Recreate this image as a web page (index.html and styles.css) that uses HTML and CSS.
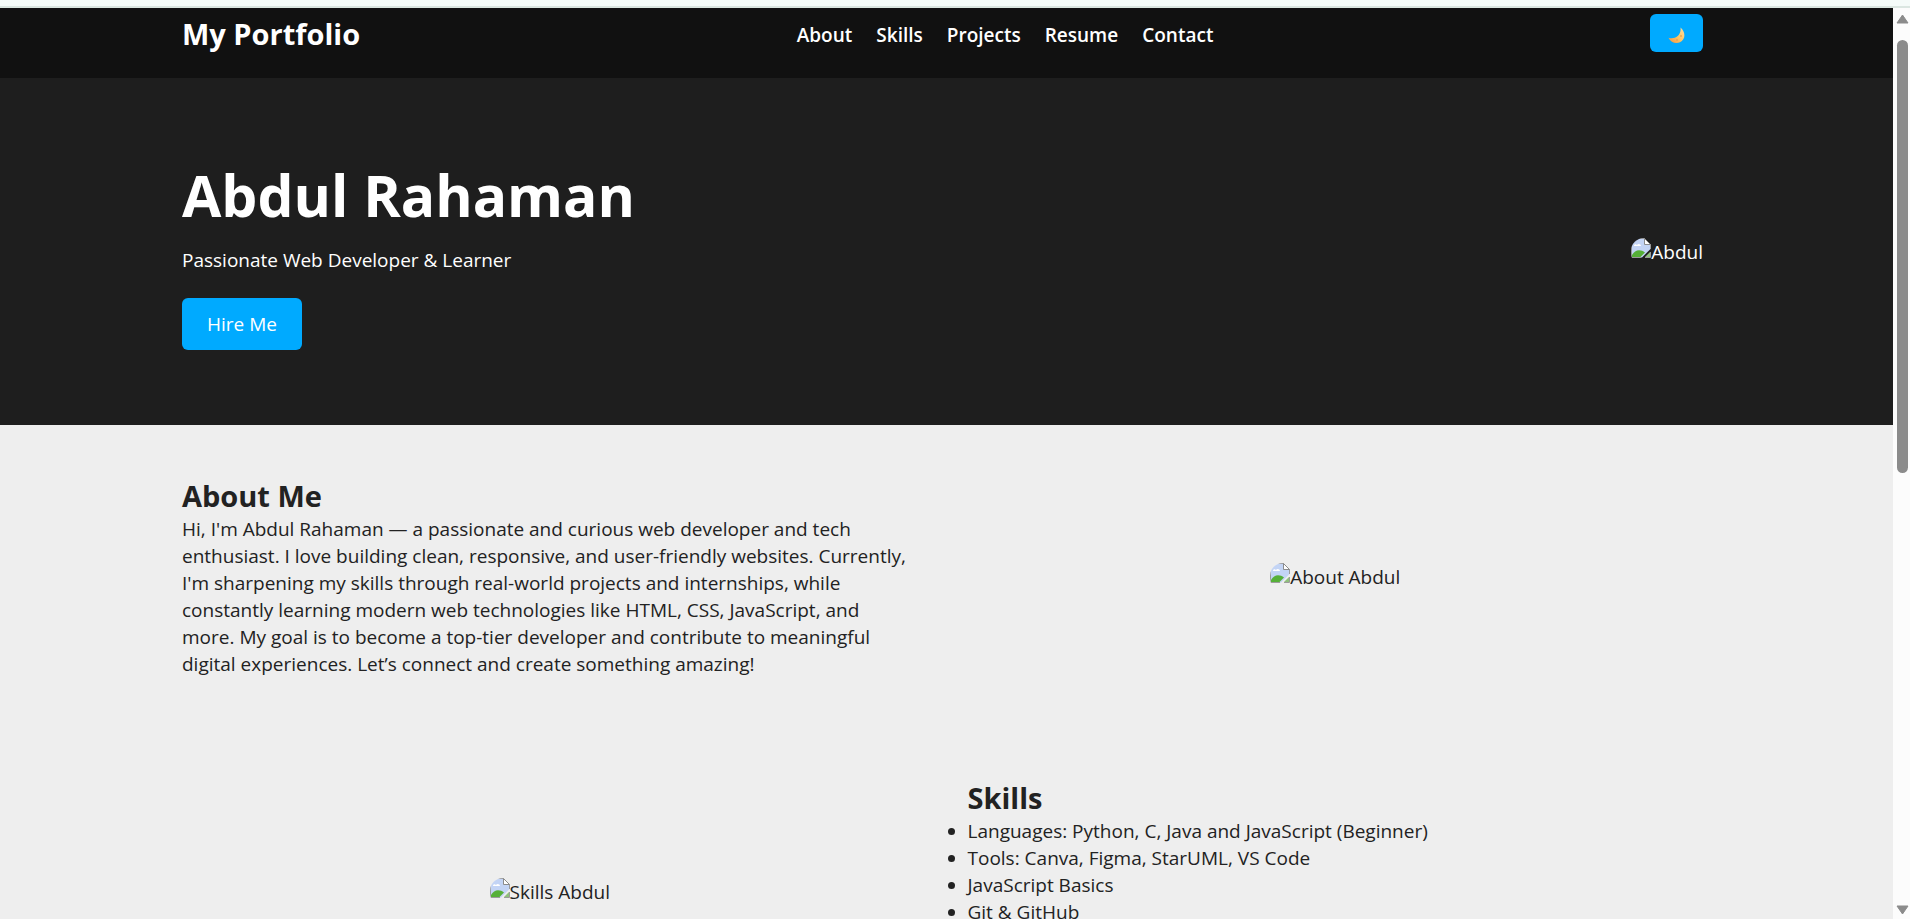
FILE: index.html
```html
<!DOCTYPE html>
<html lang="en">
<head>
<meta charset="utf-8">
<title>My Portfolio</title>
<link rel="stylesheet" href="styles.css">
</head>
<body>
<svg class="defs" aria-hidden="true">
  <symbol id="broken" viewBox="0 0 20 20">
    <path d="M.5.500h13l6 6V11L11 19.500H.5z" fill="#c3d4f5"/>
    <path d="M3 8c0-2 2-2 3-1 1-2 4-1 4 1H3z" fill="#fff"/>
    <path d="M1 19v-2c3-6 9-6 13-2.500L9.500 19z" fill="#56b038"/>
    <path d="M14 19l5-5v5z" fill="#8fc07c"/>
    <path d="M10 19.500H.5V.500h13l6 6V11M14 19.500h5.500V14" fill="none" stroke="#9b9b9b"/>
    <path d="M13.500.500v6h6z" fill="#fff" stroke="#8b8b8b"/>
  </symbol>
</svg>
<div class="edge"></div>
<div class="window">
  <div class="page">
    <header class="header wrap">
      <div class="logo">My Portfolio</div>
      <nav class="nav">
        <a href="#about">About</a>
        <a href="#skills">Skills</a>
        <a href="#projects">Projects</a>
        <a href="#resume">Resume</a>
        <a href="#contact">Contact</a>
      </nav>
      <button class="theme" type="button" aria-label="Toggle dark mode">
        <svg width="17" height="17" viewBox="0 0 17 17"><defs><linearGradient id="moon" x1="0" y1="1" x2="1" y2="0"><stop offset="0" stop-color="#f5923e"/><stop offset=".5" stop-color="#fcc566"/><stop offset="1" stop-color="#ffe0a0"/></linearGradient></defs><path d="M12.500 .5C18 5 17.500 12.500 12 15.300 8 17.300 2.500 15.500 .5 10.800 6 12.800 13.800 9 12.500 .5z" fill="url(#moon)"/><circle cx="13" cy="9" r="1" fill="#e9a650"/><circle cx="9" cy="13" r="1" fill="#e9a650"/></svg>
      </button>
    </header>
    <section class="hero wrap">
      <div>
        <h1>Abdul Rahaman</h1>
        <p class="tagline">Passionate Web Developer &amp; Learner</p>
        <a class="hire" href="#contact">Hire Me</a>
      </div>
      <div class="picture"><svg><use href="#broken"/></svg><span>Abdul</span></div>
    </section>
    <section class="row wrap" id="about">
      <div class="copy">
        <h2>About Me</h2>
        <p>Hi, I'm Abdul Rahaman — a passionate and curious web developer and tech enthusiast. I love building clean, responsive, and user-friendly websites. Currently, I'm sharpening my skills through real-world projects and internships, while constantly learning modern web technologies like HTML, CSS, JavaScript, and more. My goal is to become a top-tier developer and contribute to meaningful digital experiences. Let’s connect and create something amazing!</p>
      </div>
      <div class="picture"><svg><use href="#broken"/></svg><span>About Abdul</span></div>
    </section>
    <section class="row wrap" id="skills">
      <div class="picture"><svg><use href="#broken"/></svg><span>Skills Abdul</span></div>
      <div class="copy">
        <h2>Skills</h2>
        <ul>
          <li>Languages: Python, C, Java and JavaScript (Beginner)</li>
          <li>Tools: Canva, Figma, StarUML, VS Code</li>
          <li>JavaScript Basics</li>
          <li>Git &amp; GitHub</li>
          <li>HTML</li>
          <li>CSS</li>
          <li>Responsive Design</li>
        </ul>
      </div>
    </section>
  </div>
  <div class="scrollbar" aria-hidden="true">
    <svg width="13" height="10" viewBox="0 0 13 10"><path d="M6.500 1l5.500 8H1z"/></svg>
    <div class="track"><div class="thumb"></div></div>
    <svg width="13" height="10" viewBox="0 0 13 10"><path d="M6.500 9L1 1h11z"/></svg>
  </div>
</div>
</body>
</html>
```
FILE: styles.css
```css
* { margin: 0; padding: 0; box-sizing: border-box; }

body {
  display: flex;
  flex-direction: column;
  height: 100vh;
  overflow: hidden;
  font: 19px/27px "Open Sans", "Noto Sans", sans-serif;
  color: #222;
  background: #eee;
}

.defs { position: absolute; width: 0; height: 0; }

.edge { flex: none; height: 8px; background: #f5fbf9; border-bottom: 2px solid #dbe6e1; }

.window { flex: 1; display: flex; min-height: 0; }
.page { flex: 1; overflow: hidden; background: #eee; }

.wrap { padding-left: 182px; padding-right: 190px; }

.header {
  display: flex;
  justify-content: space-between;
  align-items: center;
  padding-top: 6px;
  padding-bottom: 26px;
  background: #111;
  color: #fff;
}
.logo { padding-top: 2px; font-size: 29px; font-weight: 700; line-height: 36px; }
.nav { display: flex; gap: 24px; padding-top: 4px; }
.nav a { color: #fff; font-weight: 600; text-decoration: none; }
.theme {
  display: flex;
  align-items: center;
  justify-content: center;
  width: 53px;
  height: 38px;
  padding-top: 4px;
  border: 0;
  border-radius: 6px;
  background: #0af;
}

.hero {
  display: flex;
  justify-content: space-between;
  align-items: center;
  padding-top: 75px;
  padding-bottom: 75px;
  background: #1e1e1e;
  color: #fff;
}
h1 { font-size: 57px; line-height: 84px; }
.tagline { margin: 10px 0 24px; }
.hire {
  display: inline-block;
  padding: 13px 25px 12px;
  border-radius: 6px;
  background: #0af;
  color: #fff;
  text-decoration: none;
  vertical-align: top;
}

.row {
  display: grid;
  grid-template-columns: 1fr 1fr;
  gap: 50px;
  align-items: center;
  padding-top: 50px;
  padding-bottom: 49px;
}
.copy { padding-right: 10px; }
h2 { padding-top: 1px; font-size: 29px; line-height: 40px; }

.picture {
  display: flex;
  justify-self: center;
  overflow: hidden;
  border-radius: 13px;
}
.picture svg { width: 20px; height: 20px; }
.picture span { padding-top: 1px; }

.scrollbar {
  display: flex;
  flex-direction: column;
  align-items: center;
  width: 17px;
  padding: 6px 0 4px 2px;
  background: #fcfcfc;
}
.scrollbar svg { flex: none; fill: #8b8b8b; stroke: #8b8b8b; stroke-linejoin: round; }
.track { flex: 1; padding: 16px 0; }
.thumb { width: 11px; height: 51%; border-radius: 6px; background: #8b8b8b; }
```
